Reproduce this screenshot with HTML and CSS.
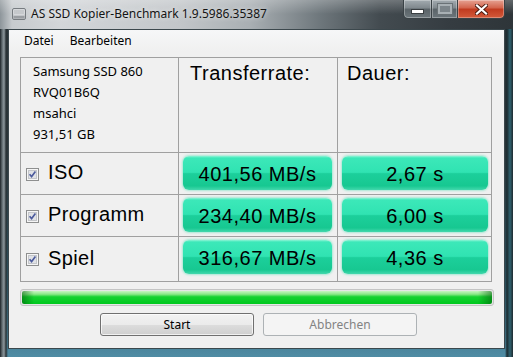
FILE: index.html
```html
<!DOCTYPE html>
<html lang="de">
<head>
<meta charset="utf-8">
<title>AS SSD Kopier-Benchmark</title>
<link rel="stylesheet" href="styles.css">
</head>
<body>
<div class="window">
  <div class="titlebar">
    <svg class="app-icon" width="14" height="12" viewBox="0 0 14 12">
      <rect x="0.5" y="0.5" width="13" height="11" rx="1.5" fill="#c4c7ca" stroke="#777c80"/>
      <rect x="1.5" y="1.5" width="11" height="5" fill="#e8eaec"/>
      <path d="M3 2v4M5 2v4M7 2v4M9 2v4M11 2v4" stroke="#a3a7ab" stroke-width="1"/>
      <rect x="1.5" y="8" width="11" height="2.5" fill="#9a9ea2"/>
    </svg>
    <span class="title">AS SSD Kopier-Benchmark 1.9.5986.35387</span>
    <div class="controls">
      <div class="ctl ctl-min"><span class="min-glyph"></span></div>
      <div class="ctl ctl-max"><span class="max-glyph"></span></div>
      <div class="ctl ctl-close">
        <svg width="13" height="11" viewBox="0 0 13 11">
          <path d="M2 1.5L11 9.5M11 1.5L2 9.5" stroke="#4a1a10" stroke-width="4" stroke-linecap="square"/>
          <path d="M2 1.5L11 9.5M11 1.5L2 9.5" stroke="#ffffff" stroke-width="2.2" stroke-linecap="square"/>
        </svg>
      </div>
    </div>
  </div>
  <div class="client">
    <div class="menubar">
      <span class="menu-item">Datei</span>
      <span class="menu-item">Bearbeiten</span>
    </div>
    <div class="content">
      <div class="results">
        <div class="cell info">
          <div>Samsung SSD 860</div>
          <div>RVQ01B6Q</div>
          <div>msahci</div>
          <div>931,51 GB</div>
        </div>
        <div class="cell head head-rate">Transferrate:</div>
        <div class="cell head head-dur">Dauer:</div>

        <div class="cell label">
          <svg class="chk" width="13" height="13" viewBox="0 0 13 13"><rect x="0.5" y="0.5" width="12" height="12" fill="#f6f6f6" stroke="#8e8f8f"/><rect x="2.5" y="2.5" width="8" height="8" fill="#e0e2e6" stroke="#c4c6ca"/><path d="M3.6 6.2L5.6 8.6L9.4 3.6" stroke="#4b5a9c" stroke-width="1.6" fill="none"/></svg>
          <span>ISO</span>
        </div>
        <div class="cell vcell vcell-rate"><div class="val">401,56 MB/s</div></div>
        <div class="cell vcell vcell-dur"><div class="val">2,67 s</div></div>

        <div class="cell label">
          <svg class="chk" width="13" height="13" viewBox="0 0 13 13"><rect x="0.5" y="0.5" width="12" height="12" fill="#f6f6f6" stroke="#8e8f8f"/><rect x="2.5" y="2.5" width="8" height="8" fill="#e0e2e6" stroke="#c4c6ca"/><path d="M3.6 6.2L5.6 8.6L9.4 3.6" stroke="#4b5a9c" stroke-width="1.6" fill="none"/></svg>
          <span>Programm</span>
        </div>
        <div class="cell vcell vcell-rate"><div class="val">234,40 MB/s</div></div>
        <div class="cell vcell vcell-dur"><div class="val">6,00 s</div></div>

        <div class="cell label">
          <svg class="chk" width="13" height="13" viewBox="0 0 13 13"><rect x="0.5" y="0.5" width="12" height="12" fill="#f6f6f6" stroke="#8e8f8f"/><rect x="2.5" y="2.5" width="8" height="8" fill="#e0e2e6" stroke="#c4c6ca"/><path d="M3.6 6.2L5.6 8.6L9.4 3.6" stroke="#4b5a9c" stroke-width="1.6" fill="none"/></svg>
          <span>Spiel</span>
        </div>
        <div class="cell vcell vcell-rate"><div class="val">316,67 MB/s</div></div>
        <div class="cell vcell vcell-dur"><div class="val">4,36 s</div></div>
      </div>
      <div class="progress"><div class="progress-fill"></div></div>
      <div class="buttons">
        <button class="btn btn-start" type="button">Start</button>
        <button class="btn" type="button" disabled>Abbrechen</button>
      </div>
    </div>
  </div>
</div>
</body>
</html>
```

FILE: styles.css
```css
html, body {
  margin: 0;
  padding: 0;
  background: #2b3337;
  overflow: hidden;
}

.window {
  width: 513px;
  height: 357px;
  display: flex;
  flex-direction: column;
  box-sizing: border-box;
  background:
    linear-gradient(90deg, #1b2226 0, #5f696e 2px, #8c979c 4px, #2a3236 6px, rgba(0,0,0,0) 8px),
    linear-gradient(270deg, #1e2a2e 0, #2f6270 3px, #1c2c31 6px, rgba(0,0,0,0) 8px),
    linear-gradient(180deg, #283236 0, #2a3438 40%, #2e5a6a 80%, #4f8ca4 100%);
}

.titlebar {
  height: 29px;
  flex: none;
  display: flex;
  align-items: flex-start;
  padding-left: 12px;
  background:
    linear-gradient(180deg, rgba(255,255,255,0.25) 0, rgba(255,255,255,0) 14px),
    linear-gradient(90deg, #8d959a 0, #c7cbce 12px, #d3d6d9 60px, #c2c6c9 180px, #a9afb3 250px, #6e777c 320px, #434b50 380px, #353c41 450px, #2e3539 513px);
}

.app-icon {
  margin-top: 8px;
  flex: none;
}

.title {
  margin-left: 5px;
  margin-top: 6px;
  font-family: "Noto Sans", "Open Sans", sans-serif;
  font-size: 12px;
  line-height: 16px;
  color: #141414;
  text-shadow: 0 0 5px rgba(255,255,255,0.85);
  white-space: nowrap;
}

.controls {
  margin-left: auto;
  margin-right: 8px;
  display: flex;
  height: 20px;
  flex: none;
}

.ctl {
  height: 19px;
  box-sizing: border-box;
  border: 1px solid #3a4246;
  border-top: none;
  display: flex;
  align-items: center;
  justify-content: center;
  box-shadow: inset 0 0 0 1px rgba(255,255,255,0.3);
}

.ctl-min {
  width: 29px;
  border-radius: 0 0 0 5px;
  background: linear-gradient(180deg, #a3abb0 0, #7f888d 45%, #5a6368 50%, #6c767b 100%);
}

.ctl-max {
  width: 26px;
  border-left: none;
  background: linear-gradient(180deg, #a3abb0 0, #7f888d 45%, #5a6368 50%, #6c767b 100%);
}

.ctl-close {
  width: 47px;
  border-left: none;
  border-radius: 0 0 5px 0;
  background: linear-gradient(180deg, #e6a292 0, #d2624a 45%, #c03a1f 50%, #d35a3a 100%);
}

.min-glyph {
  width: 11px;
  height: 3px;
  margin-top: 5px;
  background: #ffffff;
  box-shadow: 0 0 0 1px #3a3f42;
}

.max-glyph {
  width: 10px;
  height: 6px;
  border: 2px solid #a8b0b4;
  box-shadow: 0 0 0 1px #6a7276;
  background: #7c858a;
}

.client {
  flex: 1;
  margin: 0 8px 8px;
  border: 1px solid #3c484d;
  background: #f0f0f0;
  display: flex;
  flex-direction: column;
  font-family: "Noto Sans", "Open Sans", sans-serif;
}

.menubar {
  height: 21px;
  display: flex;
  align-items: center;
  padding-left: 7px;
  background: linear-gradient(180deg, #f6f7f8 0, #f0f0f0 100%);
}

.menu-item {
  padding: 0 8px;
  font-size: 12px;
  color: #000;
}

.content {
  padding: 6px 0 0 11px;
  display: flex;
  flex-direction: column;
}

.results {
  display: grid;
  grid-template-columns: 157px 158px 153px;
  grid-template-rows: 94px 41px 41px 44px;
  gap: 1px;
  width: max-content;
  border: 1px solid #a0a0a0;
  background: #a0a0a0;
}

.cell {
  background: #f0f0f0;
  box-sizing: border-box;
}

.info {
  padding: 3px 0 0 12px;
  font-size: 13px;
  line-height: 21px;
  color: #000;
}

.head {
  font-family: "Liberation Sans", Arial, sans-serif;
  font-size: 20px;
  letter-spacing: 0.5px;
  color: #000;
  padding-top: 4px;
}

.head-rate {
  padding-left: 11px;
}

.head-dur {
  padding-left: 9px;
}

.label {
  display: flex;
  align-items: center;
  padding-left: 5px;
  padding-bottom: 2px;
  font-family: "Liberation Sans", Arial, sans-serif;
  font-size: 20px;
  letter-spacing: 0.4px;
  color: #000;
}

.chk {
  flex: none;
  margin-right: 9px;
  margin-top: 3px;
}

.vcell {
  padding-top: 3px;
  padding-left: 4px;
}

.vcell-rate .val {
  width: 149px;
}

.vcell-dur .val {
  width: 146px;
}

.val {
  height: 34px;
  box-sizing: border-box;
  border-radius: 6px;
  display: flex;
  align-items: center;
  justify-content: center;
  padding-top: 3px;
  font-family: "Liberation Sans", Arial, sans-serif;
  font-size: 20px;
  letter-spacing: 0.5px;
  color: #000;
  background: linear-gradient(180deg, #8ef3d6 0, #3ce8b9 2px, #30e3b2 48%, #1ccf9b 52%, #17c891 88%, #43d8ad 100%);
  box-shadow: 0 0 2px 1px rgba(110, 226, 192, 0.55);
}

.progress {
  margin-top: 7px;
  width: 474px;
  height: 17px;
  box-sizing: border-box;
  border: 1px solid #c4c4c4;
  border-radius: 3px;
  background: #e6e6e6;
  padding: 1px;
}

.progress-fill {
  height: 100%;
  border-radius: 2px;
  background:
    linear-gradient(90deg, rgba(0,90,10,0.55) 0, rgba(0,90,10,0) 12px, rgba(0,90,10,0) calc(100% - 14px), rgba(0,90,10,0.55) 100%),
    linear-gradient(180deg, #c9f5c3 0, #8ae887 25%, #16d230 45%, #00c81e 100%);
}

.buttons {
  margin-top: 7px;
  display: flex;
  gap: 9px;
  padding-left: 80px;
}

.btn {
  width: 154px;
  height: 23px;
  box-sizing: border-box;
  border: 1px solid #707070;
  border-radius: 3px;
  font-family: "Noto Sans", "Open Sans", sans-serif;
  font-size: 12px;
  color: #000;
  padding: 0;
  background: linear-gradient(180deg, #f2f2f2 0, #ebebeb 50%, #dddddd 51%, #cfcfcf 100%);
  box-shadow: inset 0 0 0 1px rgba(255,255,255,0.7);
}

.btn:disabled {
  border-color: #adb2b5;
  color: #838383;
  background: #f4f4f4;
  box-shadow: none;
}
```
